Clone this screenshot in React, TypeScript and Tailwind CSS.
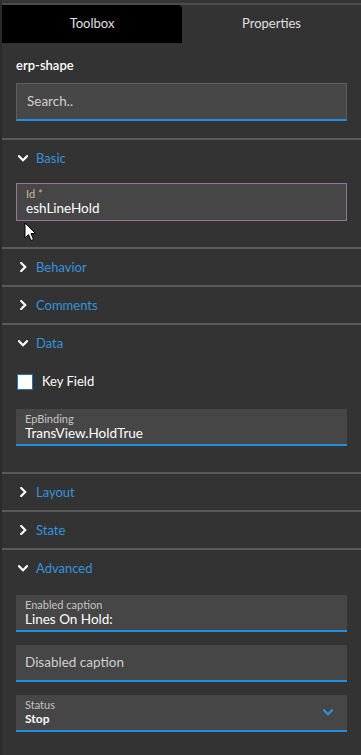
import React from "react";

const font = { fontFamily: 'Lato, "Noto Sans", sans-serif' };

function ChevronDown({ color = "#ffffff" }: { color?: string }) {
  return (
    <svg width="10" height="7" viewBox="0 0 10 7" fill="none">
      <polyline points="1,1.2 5,5.2 9,1.2" stroke={color} strokeWidth="2.2" strokeLinecap="square" />
    </svg>
  );
}

function ChevronRight() {
  return (
    <svg width="7" height="10" viewBox="0 0 7 10" fill="none">
      <polyline points="1.2,1 5.2,5 1.2,9" stroke="#ffffff" strokeWidth="2.2" strokeLinecap="square" />
    </svg>
  );
}

function Divider() {
  return <div className="h-[2px] bg-[#5a5a5a]" />;
}

function Header({ title, open }: { title: string; open: boolean }) {
  return (
    <div className="h-[36px] flex items-center pl-[16px]">
      <div className="w-[10px] flex justify-center">{open ? <ChevronDown /> : <ChevronRight />}</div>
      <span className="ml-[8px] text-[13px] text-[#3593de] leading-none">{title}</span>
    </div>
  );
}

function Field({
  label,
  value,
  className = "",
}: {
  label: string;
  value: string;
  className?: string;
}) {
  return (
    <div className={"h-[37px] bg-[#464646] border-b-2 border-[#1f8fe0] flex flex-col justify-center pl-[9px] " + className}>
      <div className="text-[11px] leading-[12px] text-[#c4c4c4]">{label}</div>
      <div className="text-[13.5px] leading-[16px] text-white">{value}</div>
    </div>
  );
}

export default function App() {
  return (
    <div style={font} className="w-[361px] h-[755px] bg-[#333333] relative overflow-hidden border-l-2 border-[#2b2b2b]">
      <div className="h-[3px] bg-[#353535]" />
      <div className="h-[2px] bg-[#4c4c4c]" />
      <div className="flex h-[38px]">
        <div className="w-[180px] bg-black rounded-tr-[4px] flex items-center justify-center text-[13px] text-[#e0e0e0]">
          Toolbox
        </div>
        <div className="flex-1 flex items-center justify-center text-[13px] text-[#e0e0e0]">Properties</div>
      </div>

      <div className="px-[14px] pt-[14px] pb-[17px]">
        <div className="text-[13px] leading-[16px] text-white font-semibold">erp-shape</div>
        <div className="mt-[10px] h-[38px] bg-[#474747] border border-[#5e5e5e] border-b-2 border-b-[#1f8fe0] flex items-center pl-[10px] text-[13.5px] text-[#d0d0d0]">
          Search..
        </div>
      </div>
      <Divider />

      <Header title="Basic" open />
      <div className="px-[14px] pt-[7px] pb-[26px]">
        <div className="h-[38px] bg-[#464646] border border-[#9a7298] flex flex-col justify-center pl-[9px]">
          <div className="text-[11px] leading-[12px] text-[#c9b99a]">Id *</div>
          <div className="text-[13.5px] leading-[16px] text-white">eshLineHold</div>
        </div>
      </div>
      <Divider />

      <Header title="Behavior" open={false} />
      <Divider />
      <Header title="Comments" open={false} />
      <Divider />

      <Header title="Data" open />
      <div className="px-[15px] pt-[13px]">
        <div className="flex items-center h-[16px]">
          <div className="w-[16px] h-[16px] bg-white border border-[#2a6fb0]" />
          <span className="ml-[9px] text-[13px] text-white">Key Field</span>
        </div>
      </div>
      <div className="px-[14px] pt-[19px] pb-[26px]">
        <Field label="EpBinding" value="TransView.HoldTrue" />
      </div>
      <Divider />

      <Header title="Layout" open={false} />
      <Divider />
      <Header title="State" open={false} />
      <Divider />

      <Header title="Advanced" open />
      <div className="px-[14px] pt-[9px] flex flex-col gap-[13px]">
        <Field label="Enabled caption" value="Lines On Hold:" />
        <div className="h-[37px] bg-[#464646] border-b-2 border-[#1f8fe0] flex items-center pl-[9px] text-[13.5px] text-[#d0d0d0]">
          Disabled caption
        </div>
        <div className="h-[37px] bg-[#464646] border-b-2 border-[#1f8fe0] flex items-center pl-[9px] pr-[14px]">
          <div className="flex-1 flex flex-col justify-center">
            <div className="text-[11px] leading-[12px] text-[#c4c4c4]">Status</div>
            <div className="text-[12px] leading-[16px] text-white font-bold">Stop</div>
          </div>
          <ChevronDown color="#2f8fe0" />
        </div>
      </div>

      <svg className="absolute left-[22px] top-[222px]" width="13" height="20" viewBox="0 0 13 20">
        <path d="M1 1 L1 16 L4.5 12.5 L7 18.5 L9.5 17.5 L7 11.5 L11.5 11.5 Z" fill="#ffffff" stroke="#000000" strokeWidth="1" strokeLinejoin="miter" />
      </svg>
    </div>
  );
}
